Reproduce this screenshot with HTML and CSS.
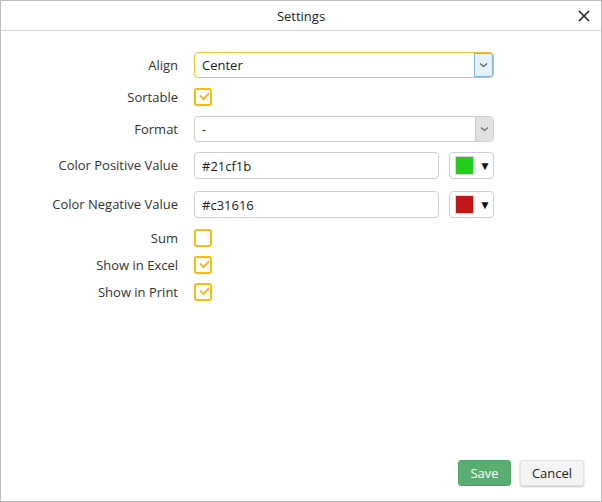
FILE: index.html
```html
<!DOCTYPE html>
<html>
<head>
    <title>Settings</title>
    <link rel="stylesheet" href="styles.css">
</head>
<body>
    <div class="dialog">
        <div class="dialog-header">
            <span class="dialog-title">Settings</span>
            <button class="close-btn" title="Close">
                <svg width="12" height="12" viewBox="0 0 12 12"><path d="M1 1L11 11M11 1L1 11" stroke="#222" stroke-width="1.6" fill="none"/></svg>
            </button>
        </div>

        <div class="dialog-body">
            <div class="form-row">
                <label class="field-label">Align</label>
                <div class="select select-active">
                    <span class="select-value">Center</span>
                    <span class="select-btn">
                        <svg width="9" height="6" viewBox="0 0 9 6"><path d="M1 1.5L4.5 4.5L8 1.5" stroke="#555" stroke-width="1.1" fill="none"/></svg>
                    </span>
                </div>
            </div>

            <div class="form-row row-check">
                <label class="field-label">Sortable</label>
                <span class="checkbox checked"></span>
            </div>

            <div class="form-row">
                <label class="field-label">Format</label>
                <div class="select">
                    <span class="select-value">-</span>
                    <span class="select-btn">
                        <svg width="9" height="6" viewBox="0 0 9 6"><path d="M1 1.5L4.5 4.5L8 1.5" stroke="#666" stroke-width="1.1" fill="none"/></svg>
                    </span>
                </div>
            </div>

            <div class="form-row row-color">
                <label class="field-label">Color Positive Value</label>
                <input class="text-input" type="text" value="#21cf1b">
                <div class="color-picker">
                    <span class="swatch" style="background-color: #21cf1b;"></span>
                    <span class="picker-arrow">▼</span>
                </div>
            </div>

            <div class="form-row row-color">
                <label class="field-label">Color Negative Value</label>
                <input class="text-input" type="text" value="#c31616">
                <div class="color-picker">
                    <span class="swatch" style="background-color: #c31616;"></span>
                    <span class="picker-arrow">▼</span>
                </div>
            </div>

            <div class="form-row row-check">
                <label class="field-label">Sum</label>
                <span class="checkbox"></span>
            </div>

            <div class="form-row row-check row-tight">
                <label class="field-label">Show in Excel</label>
                <span class="checkbox checked"></span>
            </div>

            <div class="form-row row-check row-tight">
                <label class="field-label">Show in Print</label>
                <span class="checkbox checked"></span>
            </div>
        </div>

        <div class="dialog-footer">
            <button class="btn save-btn">Save</button>
            <button class="btn cancel-btn">Cancel</button>
        </div>
    </div>
</body>
</html>
```

FILE: styles.css
```css
body {
    margin: 0;
    font-family: "Open Sans", Arial, sans-serif;
    font-size: 13px;
    color: #333;
    background: white;
}
.dialog {
    width: 602px;
    height: 502px;
    box-sizing: border-box;
    border: 1px solid #bdbdbd;
    display: flex;
    flex-direction: column;
}
.dialog-header {
    height: 29px;
    border-bottom: 1px solid #d6d6d6;
    display: flex;
    align-items: center;
    justify-content: center;
    position: relative;
}
.dialog-title {
    color: #222;
    font-size: 13px;
}
.close-btn {
    position: absolute;
    right: 10px;
    top: 8px;
    width: 14px;
    height: 14px;
    padding: 0;
    border: none;
    background: none;
    display: flex;
    align-items: center;
    justify-content: center;
    cursor: pointer;
}
.dialog-body {
    flex: 1;
    padding-top: 21px;
    display: flex;
    flex-direction: column;
    gap: 10px;
}
.form-row {
    display: flex;
    align-items: center;
    height: 26px;
}
.row-check {
    height: 18px;
}
.row-tight {
    margin-top: -1px;
}
.row-color {
    height: 28px;
    align-items: flex-start;
}
.row-color + .row-color {
    margin-top: 1px;
}
.field-label {
    width: 177px;
    margin-right: 16px;
    text-align: right;
    color: #333;
    flex-shrink: 0;
}
.row-color .field-label {
    line-height: 27px;
}
.select {
    width: 300px;
    height: 26px;
    box-sizing: border-box;
    border: 1px solid #cfcfcf;
    border-radius: 4px;
    display: flex;
    align-items: stretch;
    overflow: hidden;
}
.select-active {
    border-color: #f6c02c;
}
.select-value {
    flex: 1;
    padding-left: 7px;
    line-height: 24px;
    color: #222;
}
.select-btn {
    width: 17px;
    background: #e1e1e1;
    border-left: 1px solid #c9c9c9;
    display: flex;
    align-items: center;
    justify-content: center;
}
.select-active .select-btn {
    background: #e5f1fb;
    border: 1px solid #7fb5e6;
    border-radius: 0 3px 3px 0;
}
.checkbox {
    width: 18px;
    height: 18px;
    box-sizing: border-box;
    border: 2px solid #fbbc05;
    border-radius: 3px;
    position: relative;
}
.checked::after {
    content: "";
    position: absolute;
    left: 4px;
    top: 2px;
    width: 7px;
    height: 4px;
    border-left: 2px solid #f7b924;
    border-bottom: 2px solid #f7b924;
    transform: rotate(-45deg);
}
.text-input {
    width: 245px;
    height: 27px;
    box-sizing: border-box;
    border: 1px solid #cfcfcf;
    border-radius: 4px;
    padding: 0 7px;
    font-family: inherit;
    font-size: 13px;
    color: #222;
    outline: none;
}
.color-picker {
    width: 45px;
    height: 27px;
    box-sizing: border-box;
    margin-left: 10px;
    border: 1px solid #cfcfcf;
    border-radius: 4px;
    display: flex;
    align-items: center;
    padding-left: 5px;
}
.swatch {
    width: 19px;
    height: 19px;
    box-sizing: border-box;
    border: 1px solid #d8d8d8;
}
.picker-arrow {
    margin-left: 5px;
    font-size: 12px;
    color: #111;
}
.dialog-footer {
    display: flex;
    justify-content: flex-end;
    gap: 9px;
    padding: 0 17px 15px 0;
}
button {
    font-family: inherit;
}
.btn {
    height: 26px;
    font-size: 13px;
    border-radius: 3px;
    cursor: pointer;
}
.save-btn {
    width: 53px;
    background-color: #5aad70;
    border: 1px solid #52a568;
    color: white;
}
.cancel-btn {
    width: 64px;
    background-color: #f4f4f4;
    border: 1px solid #e2e2e2;
    color: #222;
    box-shadow: 0 1px 2px rgba(0,0,0,0.25);
}
```
